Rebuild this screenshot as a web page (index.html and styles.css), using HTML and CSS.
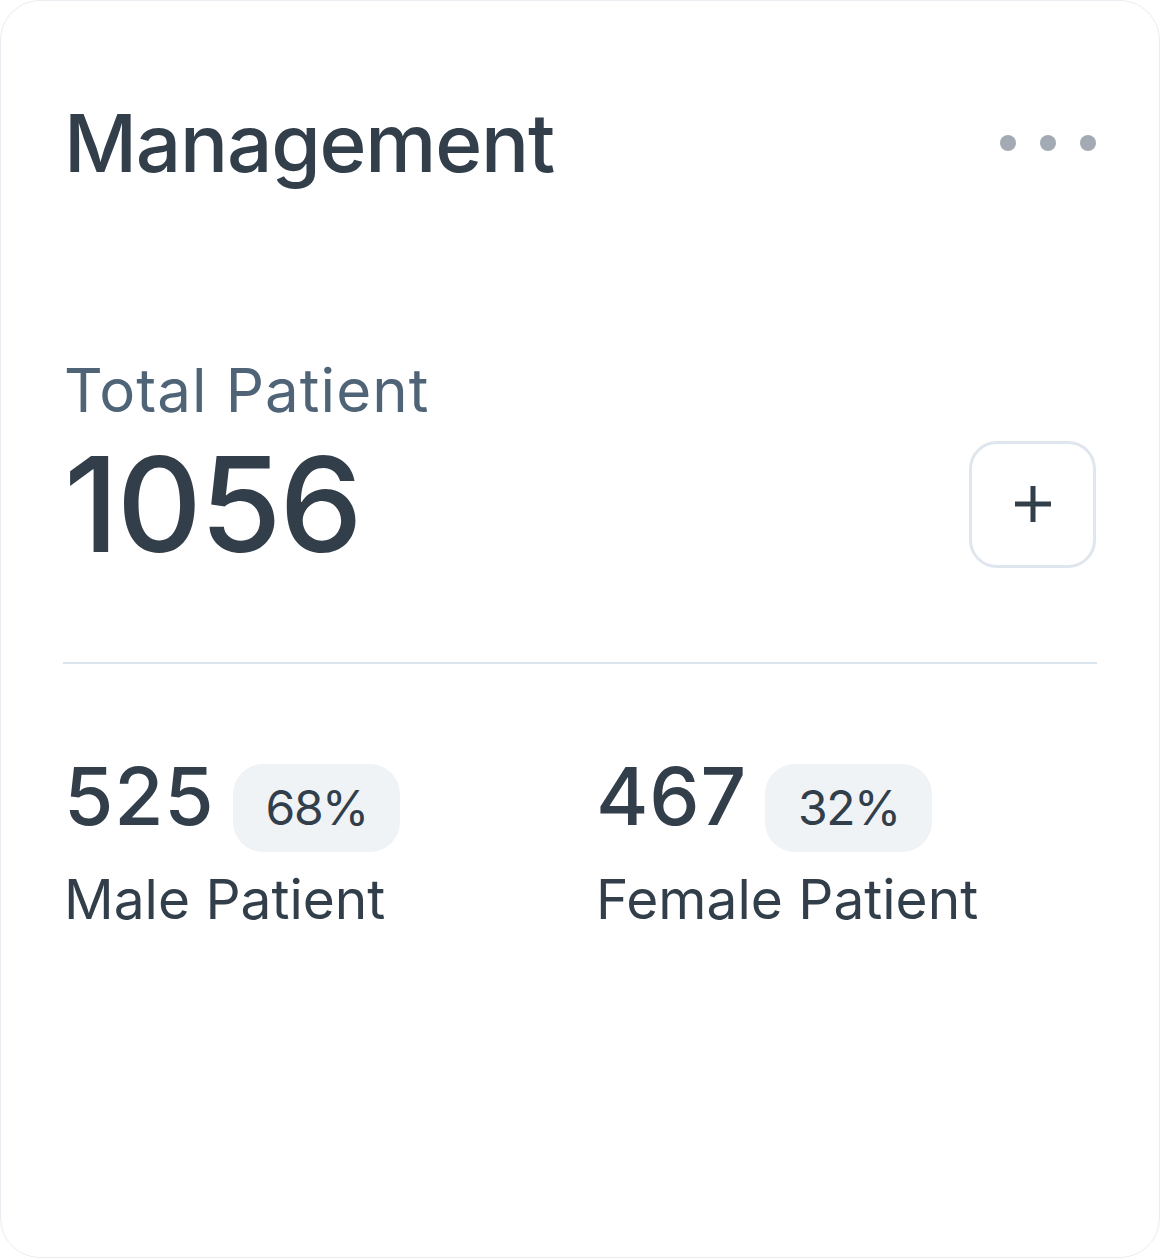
FILE: index.html
```html
<!DOCTYPE html>
<html lang="en">
<head>
<meta charset="utf-8">
<title>Management</title>
<link rel="stylesheet" href="styles.css">
</head>
<body>
<div class="card">
  <div class="card-header">
    <h1 class="title">Management</h1>
    <button class="more" aria-label="More">
      <span class="dot"></span><span class="dot"></span><span class="dot"></span>
    </button>
  </div>

  <div class="total">
    <div class="total-label">Total Patient</div>
    <div class="total-row">
      <div class="total-value">1056</div>
      <button class="add" aria-label="Add">
        <svg width="40" height="40" viewBox="0 0 40 40"><path d="M20 2v36M2 20h36" stroke="#323f4b" stroke-width="5" fill="none"/></svg>
      </button>
    </div>
  </div>

  <hr class="divider">

  <div class="stats">
    <div class="stat">
      <div class="stat-top">
        <span class="stat-value">525</span>
        <span class="badge">68%</span>
      </div>
      <div class="stat-label">Male Patient</div>
    </div>
    <div class="stat">
      <div class="stat-top">
        <span class="stat-value">467</span>
        <span class="badge">32%</span>
      </div>
      <div class="stat-label">Female Patient</div>
    </div>
  </div>
</div>
</body>
</html>
```

FILE: styles.css
```css
html, body {
  margin: 0;
  padding: 0;
  background: #ffffff;
}

body {
  font-family: Inter, "Noto Sans", sans-serif;
  color: #323f4b;
}

.card {
  box-sizing: border-box;
  width: 1160px;
  height: 1258px;
  border: 1px solid #e9edf1;
  border-radius: 40px;
  padding: 94px 63px 0 63px;
  background: #ffffff;
}

.card-header {
  display: flex;
  align-items: center;
  justify-content: space-between;
}

.title {
  margin: 0;
  font-size: 80px;
  line-height: 96px;
  font-weight: 500;
  letter-spacing: -1.2px;
  color: #323f4b;
}

.more {
  display: flex;
  gap: 24px;
  padding: 0;
  border: 0;
  background: none;
}

.dot {
  width: 16px;
  height: 16px;
  border-radius: 50%;
  background: #a3aab3;
}

.total {
  margin-top: 163px;
}

.total-label {
  font-size: 60px;
  line-height: 72px;
  letter-spacing: 1.1px;
  color: #506478;
}

.total-row {
  display: flex;
  align-items: center;
  justify-content: space-between;
  margin-top: 12px;
}

.total-value {
  font-size: 132px;
  line-height: 132px;
  font-weight: 500;
  letter-spacing: -2px;
  color: #323f4b;
}

.add {
  box-sizing: border-box;
  width: 127px;
  height: 127px;
  border: 3px solid #dfe6ed;
  border-radius: 28px;
  background: #ffffff;
  display: flex;
  align-items: center;
  justify-content: center;
  padding: 0;
}

.divider {
  margin: 92px -1px 0 -1px;
  border: 0;
  height: 2px;
  background: #dde5ec;
}

.stats {
  display: grid;
  grid-template-columns: 1fr 1fr;
  column-gap: 32px;
  margin-top: 84px;
}

.stat-top {
  display: flex;
  align-items: baseline;
  gap: 18px;
}

.stat-value {
  font-size: 80px;
  line-height: 96px;
  font-weight: 500;
  letter-spacing: 0.8px;
  color: #323f4b;
}

.badge {
  display: inline-block;
  height: 88px;
  line-height: 88px;
  padding: 0 32px 0 33px;
  border-radius: 30px;
  background: #f0f3f6;
  font-size: 48px;
  letter-spacing: -1.5px;
  color: #323f4b;
}

.stat-label {
  margin-top: 14px;
  font-size: 55px;
  line-height: 67px;
  color: #323f4b;
}
```
